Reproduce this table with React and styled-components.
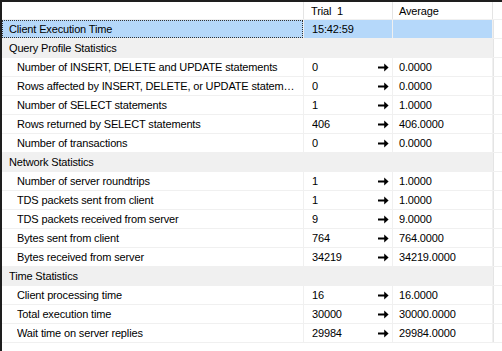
import styled, { createGlobalStyle } from 'styled-components';

const GlobalStyle = createGlobalStyle`
    html, body {
        margin: 0;
        padding: 0;
        background: #ffffff;
    }
    body {
        font-family: 'Liberation Sans', Arial, sans-serif;
        font-size: 11px;
        letter-spacing: -0.15px;
        color: #000000;
    }
`;

const Frame = styled.div`
    width: 502px;
    height: 351px;
    box-sizing: border-box;
    border-top: 2px solid #1e1e1e;
    border-left: 2px solid #1e1e1e;
    background: #ffffff;
    overflow: hidden;
`;

const Row = styled.div`
    display: grid;
    grid-template-columns: 302px 89px 100px 1fr;
    height: ${({ $header }) => ($header ? '18px' : '19px')};
    background: ${({ $kind }) =>
        $kind === 'group' ? '#f0f0f0' : '#ffffff'};
    box-sizing: border-box;
    border-bottom: 1px solid #f0f0f0;
`;

const Cell = styled.div`
    box-sizing: border-box;
    display: flex;
    align-items: center;
    padding-left: ${({ $indent }) => $indent}px;
    padding-right: 4px;
    border-right: 1px solid ${({ $line }) => $line || '#f0f0f0'};
    background: ${({ $selected }) => ($selected ? '#b5d8fa' : 'transparent')};
    white-space: nowrap;
    overflow: hidden;
    min-width: 0;
    position: relative;
`;

const NumberCell = styled(Cell)`
    padding-right: 0;
`;

const Label = styled.span`
    overflow: hidden;
    text-overflow: ellipsis;
    white-space: nowrap;
    flex: 1;
`;

const Focus = styled.div`
    position: absolute;
    inset: 0;
    border: 1px dotted #333333;
    pointer-events: none;
`;

const Arrow = styled.svg`
    width: 11px;
    height: 9px;
    margin-right: 3px;
    flex: none;
`;

const Filler = styled.div`
    border-left: 1px solid #e4e4e4;
    background: #ffffff;
`;

function RightArrow() {
    return (
        <Arrow viewBox="0 0 11 9">
            <path d="M0 3.4h6.2V0.6L10.6 4.5 6.2 8.4V5.6H0z" fill="#000" />
        </Arrow>
    );
}

const sections = [
    {
        title: 'Query Profile Statistics',
        rows: [
            ['Number of INSERT, DELETE and UPDATE statements', '0', '0.0000'],
            ['Rows affected by INSERT, DELETE, or UPDATE statements', '0', '0.0000'],
            ['Number of SELECT statements', '1', '1.0000'],
            ['Rows returned by SELECT statements', '406', '406.0000'],
            ['Number of transactions', '0', '0.0000'],
        ],
    },
    {
        title: 'Network Statistics',
        rows: [
            ['Number of server roundtrips', '1', '1.0000'],
            ['TDS packets sent from client', '1', '1.0000'],
            ['TDS packets received from server', '9', '9.0000'],
            ['Bytes sent from client', '764', '764.0000'],
            ['Bytes received from server', '34219', '34219.0000'],
        ],
    },
    {
        title: 'Time Statistics',
        rows: [
            ['Client processing time', '16', '16.0000'],
            ['Total execution time', '30000', '30000.0000'],
            ['Wait time on server replies', '29984', '29984.0000'],
        ],
    },
];

function App() {
    return (
        <>
            <GlobalStyle />
            <Frame>
                <Row $header>
                    <Cell $line="#e4e4e4" />
                    <Cell $indent={7} $line="#e4e4e4">Trial&nbsp;&nbsp;1</Cell>
                    <Cell $indent={6} $line="#e4e4e4">Average</Cell>
                    <div />
                </Row>
                <Row>
                    <Cell $indent={7} $selected>
                        <Label>Client Execution Time</Label>
                        <Focus />
                    </Cell>
                    <Cell $indent={8} $selected>15:42:59</Cell>
                    <Cell $selected />
                    <Filler />
                </Row>
                {sections.map((section) => (
                    <div key={section.title}>
                        <Row $kind="group">
                            <Cell $indent={7}>
                                <Label>{section.title}</Label>
                            </Cell>
                            <Cell />
                            <Cell />
                            <Filler />
                        </Row>
                        {section.rows.map(([name, trial, avg]) => (
                            <Row key={name}>
                                <Cell $indent={15}>
                                    <Label>{name}</Label>
                                </Cell>
                                <NumberCell $indent={8}>
                                    <Label>{trial}</Label>
                                    <RightArrow />
                                </NumberCell>
                                <Cell $indent={6}>{avg}</Cell>
                                <Filler />
                            </Row>
                        ))}
                    </div>
                ))}
            </Frame>
        </>
    );
}

export default App;
